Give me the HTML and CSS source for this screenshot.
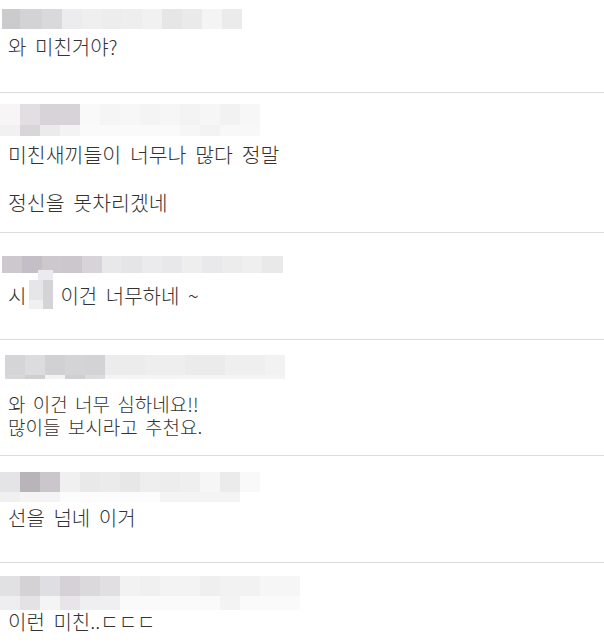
FILE: index.html
```html
<!DOCTYPE html>
<html lang="ko">
<head>
    <meta charset="UTF-8">
    <meta name="viewport" content="width=device-width, initial-scale=1.0">
    <title>댓글</title>
    <link rel="stylesheet" href="styles.css">
</head>
<body>
    <div class="comments">
        <div class="comment c1">
            <div class="nick m1"></div>
            <p class="text">와 미친거야?</p>
        </div>
        <div class="comment c2">
            <div class="nick m2"></div>
            <p class="text wide">미친새끼들이 너무나 많다 정말<br><br>정신을 못차리겠네</p>
        </div>
        <div class="comment c3">
            <div class="nick m3"></div>
            <p class="text">시<span class="censor"></span>이건 너무하네 ~</p>
        </div>
        <div class="comment c4">
            <div class="nick m4"></div>
            <p class="text tight">와 이건 너무 심하네요!!</p>
            <p class="text tight">많이들 보시라고 추천요.</p>
        </div>
        <div class="comment c5">
            <div class="nick m5"></div>
            <p class="text">선을 넘네 이거</p>
        </div>
        <div class="comment c6">
            <div class="nick m6"></div>
            <p class="text">이런 미친..ㄷㄷㄷ</p>
        </div>
    </div>
</body>
</html>
```

FILE: styles.css
```css
body {
    margin: 0;
    background-color: #fff;
    color: #333;
    font-family: "Noto Sans CJK KR", "Noto Sans", sans-serif;
}
.comments {
    width: 604px;
}
.comment {
    border-bottom: 1px solid #dcdcdc;
}
.comment:last-child {
    border-bottom: none;
}
.text {
    margin: 0;
    padding-left: 8px;
    font-size: 20px;
    font-weight: 300;
    line-height: 24px;
    word-spacing: 3px;
    white-space: nowrap;
}
.text.wide {
    font-size: 20.5px;
}
.text.tight {
    font-size: 19px;
    line-height: 23px;
    word-spacing: 2px;
}

/* spacing per comment */
.c1 { padding: 9px 0 33px; }
.c2 { padding: 11px 0 18px; }
.c3 { padding: 23px 0 31px; }
.c4 { padding: 15px 0 17px; }
.c5 { padding: 16px 0 32px; }
.c6 { padding: 13px 0 9px; }

/* mosaic nicknames */
.nick {
    background-repeat: no-repeat;
}
.m1 {
    width: 240px;
    height: 20px;
    margin: 0 0 6px 2px;
    background-image: linear-gradient(to right,
        #cbcbcd 0 18px, #d3d3d5 18px 40px, #d9d9db 40px 60px, #ececee 60px 80px,
        #efeff0 80px 100px, #ededee 100px 120px, #eeeeef 120px 140px, #f1f1f2 140px 160px,
        #e6e6e7 160px 180px, #eaeaeb 180px 200px, #f4f4f5 200px 220px, #ebebec 220px 240px);
}
.m2 {
    width: 260px;
    height: 32px;
    margin-bottom: 6px;
    background-image:
        linear-gradient(to right,
            #f7f5f5 0 20px, #e2dee1 20px 40px, #d7d3d8 40px 80px, #f9f9fa 80px 100px,
            #f5f5f6 100px 120px, #f7f7f8 120px 140px, #f4f4f5 140px 160px, #f6f6f7 160px 180px,
            #f3f3f4 180px 200px, #f6f6f7 200px 220px, #f2f2f3 220px 240px, #f7f7f8 240px 260px),
        linear-gradient(to right,
            #f1f1f1 0 20px, #d8d6d8 20px 40px, #ecebec 40px 60px, #f3f3f3 60px 80px,
            #fafafa 80px 180px, #f6f6f7 180px 200px, #f3f3f4 200px 220px, #f8f8f8 220px 260px);
    background-size: 100% 21px, 100% 11px;
    background-position: 0 0, 0 21px;
}
.m3 {
    width: 281px;
    height: 17px;
    margin: 0 0 11px 2px;
    background-image: linear-gradient(to right,
        #ccc8cd 0 20px, #c4bec6 20px 40px, #cdc8ce 40px 60px, #cbc7cc 60px 80px,
        #d7d3d8 80px 100px, #e8e8ea 100px 120px, #e5e5e7 120px 140px, #ebebed 140px 160px,
        #e8e8ea 160px 180px, #eeeeef 180px 200px, #e9e9eb 200px 220px, #ececed 220px 240px,
        #efeff0 240px 260px, #e9e9ea 260px 281px);
}
.m4 {
    width: 280px;
    height: 24px;
    margin: 0 0 13px 5px;
    background-image:
        linear-gradient(to right,
            #d5d4d7 0 20px, #dcdbde 20px 40px, #d1d0d3 40px 60px, #d4d3d6 60px 80px,
            #d3d2d5 80px 100px, #ececed 100px 140px, #eeeeef 140px 180px, #ebebec 180px 220px,
            #efeff0 220px 260px, #f2f2f3 260px 280px),
        linear-gradient(to right,
            #d8d7da 0 20px, #cfcfd1 20px 40px, #f3f3f3 40px 60px, #cfcfd1 60px 80px,
            #dcdcde 80px 100px, #f4f4f5 100px 280px);
    background-size: 100% 20px, 100% 4px;
    background-position: 0 0, 0 20px;
}
.m5 {
    width: 260px;
    height: 30px;
    margin-bottom: 4px;
    background-image:
        linear-gradient(to right,
            #e4e3e5 0 20px, #b8b4b9 20px 40px, #cac6cb 40px 60px, #f0f0f1 60px 80px,
            #e9e9ea 80px 100px, #ebebec 100px 120px, #e7e7e8 120px 140px, #eeeeef 140px 160px,
            #ededee 160px 180px, #efeff0 180px 200px, #f6f6f7 200px 220px, #ebebec 220px 240px,
            #f9f9f9 240px 260px),
        linear-gradient(to right,
            #f0f0f1 0 20px, #f4f4f5 20px 60px, #fcfcfc 60px 160px, #f4f4f5 160px 240px,
            #fff 240px 260px);
    background-size: 100% 20px, 100% 10px;
    background-position: 0 0, 0 20px;
}
.m6 {
    width: 300px;
    height: 34px;
    background-image:
        linear-gradient(to right,
            #e1e0e2 0 20px, #d5d2d6 20px 40px, #dfdee3 40px 60px, #d5d1d6 60px 80px,
            #dcd9dd 80px 100px, #e1dfe2 100px 120px, #f2f2f3 120px 140px, #f0f0f1 140px 160px,
            #f3f3f4 160px 200px, #efeff0 200px 220px, #f2f2f3 220px 260px, #f6f6f7 260px 300px),
        linear-gradient(to right,
            #eeedef 0 20px, #e4e2e5 20px 40px, #f4f4f5 40px 60px, #e7e5e8 60px 80px,
            #efeef0 80px 120px, #fafafa 120px 220px, #f3f3f4 220px 240px, #fafafa 240px 300px);
    background-size: 100% 20px, 100% 14px;
    background-position: 0 0, 0 20px;
}

/* mosaic over a word in the text */
.censor {
    display: inline-block;
    position: relative;
    width: 24px;
    height: 1px;
    margin: 0 7px 0 3px;
}
.censor::before {
    content: "";
    position: absolute;
    left: 0;
    bottom: -5px;
    width: 24px;
    height: 39px;
    background-image:
        linear-gradient(to right, transparent 0 9px, #ebeaee 9px 24px),
        linear-gradient(to right, #e6e6e8 0 14px, #d4d4d6 14px 24px),
        linear-gradient(to right, #f0f0f0 0 14px, #d4d4d6 14px 24px);
    background-size: 100% 10px, 100% 20px, 100% 9px;
    background-position: 0 0, 0 10px, 0 30px;
    background-repeat: no-repeat;
}
```
